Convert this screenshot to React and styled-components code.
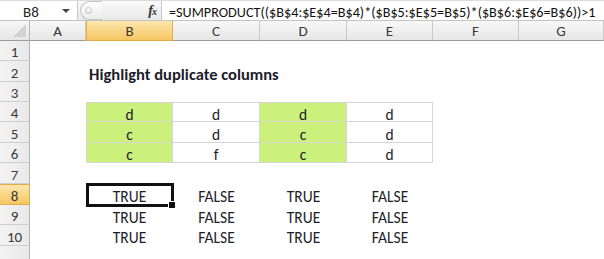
import React from 'react';
import styled, { createGlobalStyle } from 'styled-components';

const FONT = `Carlito, Lato, "Open Sans", "Liberation Sans", sans-serif`;

const Global = createGlobalStyle`
  html, body { margin: 0; padding: 0; background: #fff; overflow: hidden; }
  body { font-family: ${FONT}; }
  * { box-sizing: border-box; }
`;

const Page = styled.div`
  width: 604px;
  height: 259px;
  overflow: hidden;
  display: flex;
  flex-direction: column;
`;

const FormulaBar = styled.div`
  display: flex;
  height: 21px;
  background: #fff;
  border-top: 1px solid #dcdcdc;
  border-bottom: 1px solid #c3c3c3;
`;

const NameBox = styled.div`
  width: 78px;
  display: flex;
  align-items: center;
  justify-content: space-between;
  padding: 3px 7px 0 23px;
  font: 15px ${FONT};
  color: #222;
  border-right: 1px solid #c8c8c8;
`;

const Caret = styled.span`
  width: 0;
  height: 0;
  margin-top: -2px;
  border-left: 4px solid transparent;
  border-right: 4px solid transparent;
  border-top: 4px solid #444;
`;

const Splitter = styled.div`
  width: 84px;
  display: flex;
  align-items: center;
  justify-content: space-between;
  padding: 0 5px 0 2px;
  background: linear-gradient(#fafafa, #e8e8e8);
  border-right: 1px solid #c8c8c8;
`;

const Knob = styled.div`
  width: 22px;
  height: 19px;
  border: 1px solid #c4c4c4;
  border-right: none;
  border-radius: 10px 0 0 10px;
  background: linear-gradient(#fdfdfd, #ececec);
  display: flex;
  align-items: center;
  padding-left: 4px;
`;

const KnobDot = styled.span`
  width: 7px;
  height: 7px;
  border-radius: 50%;
  border: 1px solid #c6c6c6;
  background: linear-gradient(#fff, #e2e2e2);
`;

const Fx = styled.span`
  font: italic bold 14px "Liberation Serif", serif;
  color: #333;
  letter-spacing: -1px;
  & small { font-size: 10px; }
`;

const FormulaInput = styled.div`
  flex: 1;
  display: flex;
  align-items: center;
  padding: 3px 0 0 7px;
  font: 14.2px ${FONT};
  color: #111;
  white-space: nowrap;
  overflow: hidden;
`;

const Strip = styled.div`
  height: 4px;
  background: #ececec;
`;

const Sheet = styled.div`
  display: grid;
  grid-template-columns: 30px 56px 87px 87px 87px 86px 86px 1fr;
  grid-template-rows: ${(p) => p.$rows};
  font-family: ${FONT};
`;

const Corner = styled.div`
  position: relative;
  background: linear-gradient(#f7f7f7, #e6e6e6);
  border-right: 1px solid #b5b5b5;
  border-bottom: 1px solid #9c9c9c;
  &::after {
    content: '';
    position: absolute;
    right: 3px;
    bottom: 3px;
    width: 0;
    height: 0;
    border-left: 13px solid transparent;
    border-bottom: 13px solid #d2d2d2;
  }
`;

const ColHeader = styled.div`
  display: flex;
  align-items: center;
  justify-content: center;
  font-size: 15px;
  color: #3a3a3a;
  background: ${(p) =>
    p.$active ? 'linear-gradient(#fde6ae, #f6c761)' : 'linear-gradient(#f8f8f8, #e6e6e6)'};
  border-right: 1px solid ${(p) => (p.$active ? '#e2ad47' : '#c9c9c9')};
  border-left: ${(p) => (p.$active ? '1px solid #e2ad47' : 'none')};
  border-bottom: 1px solid ${(p) => (p.$active ? '#e2ad47' : '#9c9c9c')};
`;

const RowHeader = styled.div`
  display: flex;
  align-items: center;
  justify-content: center;
  padding-top: 3px;
  font-size: 15px;
  color: #3a3a3a;
  background: ${(p) =>
    p.$active ? 'linear-gradient(#fde6ae, #f6c761)' : 'linear-gradient(90deg, #f3f3f3, #e9e9e9)'};
  border-right: 1px solid ${(p) => (p.$active ? '#e2ad47' : '#b5b5b5')};
  border-bottom: 1px solid ${(p) => (p.$active ? '#e2ad47' : '#cfcfcf')};
  border-top: ${(p) => (p.$active ? '1px solid #e2ad47' : 'none')};
`;

const Cell = styled.div`
  position: relative;
  display: flex;
  align-items: center;
  justify-content: ${(p) => (p.$align === 'left' ? 'flex-start' : 'center')};
  padding-left: ${(p) => (p.$align === 'left' ? '3px' : '0')};
  padding-top: 4px;
  font-size: ${(p) => (p.$bold ? '16.5px' : '15.5px')};
  font-weight: ${(p) => (p.$bold ? 700 : 400)};
  color: #1d1d2b;
  white-space: nowrap;
  overflow: visible;
  background: ${(p) => (p.$fill ? p.$fill : 'transparent')};
  border-right: ${(p) => (p.$boxed ? '1px solid #d6d6d6' : 'none')};
  border-bottom: ${(p) => (p.$boxed ? '1px solid #d6d6d6' : 'none')};
  border-top: ${(p) => (p.$boxTop ? '1px solid #d6d6d6' : 'none')};
  border-left: ${(p) => (p.$boxLeft ? '1px solid #d6d6d6' : 'none')};
  z-index: ${(p) => (p.$active ? 2 : 1)};
`;

const ActiveFrame = styled.div`
  position: absolute;
  top: -1px;
  left: 0;
  right: -1px;
  bottom: -2px;
  border: 3px solid #111;
  pointer-events: none;
`;

const FillHandle = styled.div`
  position: absolute;
  right: -4px;
  bottom: -4px;
  width: 6px;
  height: 6px;
  background: #111;
  box-shadow: 0 0 0 1px #fff;
`;

const GREEN = '#cbf07b';
const COLS = ['A', 'B', 'C', 'D', 'E', 'F', 'G'];
const HEIGHTS = [20, 21, 20, 20, 21, 20, 21, 21, 20, 21, 20];

const tableRow = (vals) =>
  vals.map((v, i) => ({
    col: i + 1,
    text: v,
    fill: i % 2 === 0 ? GREEN : '#fff',
    boxed: true,
  }));

const resultRow = () => [
  { col: 1, text: 'TRUE' },
  { col: 2, text: 'FALSE' },
  { col: 3, text: 'TRUE' },
  { col: 4, text: 'FALSE' },
];

const ROWS = {
  2: [{ col: 1, text: 'Highlight duplicate columns', bold: true, align: 'left' }],
  4: tableRow(['d', 'd', 'd', 'd']).map((c) => ({ ...c, boxTop: true })),
  5: tableRow(['c', 'd', 'c', 'd']),
  6: tableRow(['c', 'f', 'c', 'd']),
  8: resultRow().map((c) => (c.col === 1 ? { ...c, active: true } : c)),
  9: resultRow(),
  10: resultRow(),
};

export default function App() {
  const rowsTemplate = ['20px', ...HEIGHTS.map((h) => `${h}px`)].join(' ');
  return (
    <Page>
      <Global />
      <FormulaBar>
        <NameBox>
          B8
          <Caret />
        </NameBox>
        <Splitter>
          <Knob>
            <KnobDot />
          </Knob>
          <Fx>
            f<small>x</small>
          </Fx>
        </Splitter>
        <FormulaInput>=SUMPRODUCT(($B$4:$E$4=B$4)*($B$5:$E$5=B$5)*($B$6:$E$6=B$6))&gt;1</FormulaInput>
      </FormulaBar>
      <Strip />
      <Sheet $rows={rowsTemplate}>
        <Corner />
        {COLS.map((c) => (
          <ColHeader key={c} $active={c === 'B'}>
            {c}
          </ColHeader>
        ))}
        {HEIGHTS.map((_, ri) => {
          const r = ri + 1;
          const cells = ROWS[r] || [];
          return (
            <React.Fragment key={r}>
              <RowHeader $active={r === 8}>{r <= 10 ? r : null}</RowHeader>
              {COLS.map((_, ci) => {
                const c = cells.find((x) => x.col === ci);
                return (
                  <Cell
                    key={ci}
                    $fill={c && c.fill}
                    $boxed={c && c.boxed}
                    $boxTop={c && c.boxTop}
                    $boxLeft={c && c.boxed && ci === 1}
                    $bold={c && c.bold}
                    $align={c && c.align}
                    $active={c && c.active}
                  >
                    {c ? c.text : null}
                    {c && c.active ? (
                      <ActiveFrame>
                        <FillHandle />
                      </ActiveFrame>
                    ) : null}
                  </Cell>
                );
              })}
            </React.Fragment>
          );
        })}
      </Sheet>
    </Page>
  );
}
